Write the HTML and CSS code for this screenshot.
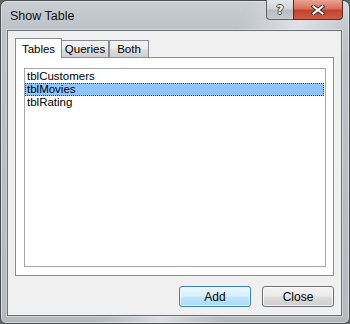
FILE: index.html
```html
<!DOCTYPE html>
<html lang="en">

<head>
    <meta charset="UTF-8">
    <title>Show Table</title>
    <link rel="stylesheet" href="styles.css">
</head>

<body>
    <div class="window">
        <div class="titlebar">
            <span class="title">Show Table</span>
            <div class="caption-buttons">
                <button class="cap cap-help">?</button>
                <button class="cap cap-close">
                    <svg width="14" height="10" viewBox="0 0 14 10">
                        <path d="M2.5 1.5 L11.5 8.5 M11.5 1.5 L2.5 8.5" stroke="#3a2a28" stroke-width="4" stroke-linecap="square" fill="none"/>
                        <path d="M2.5 1.5 L11.5 8.5 M11.5 1.5 L2.5 8.5" stroke="#fff" stroke-width="2" stroke-linecap="square" fill="none"/>
                    </svg>
                </button>
            </div>
        </div>

        <div class="client">
            <div class="tabs">
                <div class="tab active">Tables</div>
                <div class="tab tab-queries">Queries</div>
                <div class="tab tab-both">Both</div>
            </div>
            <div class="panel">
                <ul class="listbox">
                    <li>tblCustomers</li>
                    <li class="selected">tblMovies</li>
                    <li>tblRating</li>
                </ul>
            </div>
            <div class="actions">
                <button class="btn default">Add</button>
                <button class="btn">Close</button>
            </div>
        </div>
    </div>
</body>

</html>
```

FILE: styles.css
```css
html,
body {
    margin: 0;
    padding: 0;
    background-color: #5e646b;
}

body {
    width: 350px;
    height: 324px;
    font-family: "Liberation Sans", Arial, sans-serif;
    font-size: 11px;
    color: #000;
}

.window {
    width: 350px;
    height: 324px;
    box-sizing: border-box;
    border: 1px solid #4a4f55;
    border-radius: 7px 7px 6px 6px;
    display: flex;
    flex-direction: column;
    padding: 0 7px 7px 6px;
    background:
        linear-gradient(115deg, rgba(255, 255, 255, 0) 50%, rgba(255, 255, 255, 0.5) 62%, rgba(255, 255, 255, 0) 74%),
        linear-gradient(to bottom, #c9ced3 0, #bcc2c8 30px, #b4bac0 100%);
    box-shadow: inset 0 0 0 1px rgba(255, 255, 255, 0.45);
}

.titlebar {
    height: 29px;
    display: flex;
    align-items: flex-start;
    flex-shrink: 0;
}

.title {
    font-size: 12.5px;
    padding: 8px 0 0 3px;
    color: #111;
}

.caption-buttons {
    margin-left: auto;
    display: flex;
    margin-top: -1px;
    margin-right: -1px;
}

.cap {
    height: 20px;
    padding: 0;
    margin: 0;
    border: 1px solid #5f656c;
    border-top: none;
    display: flex;
    align-items: center;
    justify-content: center;
}

.cap-help {
    width: 27px;
    border-radius: 0 0 0 4px;
    border-right: none;
    background: linear-gradient(to bottom, #e4e7ea 0, #d2d6da 45%, #b7bcc2 55%, #c6cbd0 100%);
    font-family: "DejaVu Sans", sans-serif;
    font-weight: bold;
    font-size: 12px;
    color: #fff;
    text-shadow: 1px 0 0 #3b3f44, -1px 0 0 #3b3f44, 0 1px 0 #3b3f44, 0 -1px 0 #3b3f44;
}

.cap-close {
    width: 50px;
    border-color: #5a2b24;
    border-radius: 0 0 4px 0;
    background: linear-gradient(to bottom, #e8a493 0, #d7705c 45%, #c0432e 55%, #cf5d45 100%);
}

.client {
    flex: 1;
    display: flex;
    flex-direction: column;
    background-color: #f0f0f0;
    border: 1px solid #6a6f75;
    padding: 7px 7px 8px 7px;
    box-shadow: 0 0 0 1px rgba(255, 255, 255, 0.35);
}

.tabs {
    display: flex;
    align-items: flex-end;
    margin-bottom: -1px;
    position: relative;
    z-index: 1;
}

.tab {
    box-sizing: border-box;
    height: 17px;
    margin-bottom: 1px;
    border: 1px solid #898c95;
    border-bottom: none;
    text-align: center;
    padding-top: 2px;
    font-size: 11.5px;
    background: linear-gradient(to bottom, #f3f3f3 0, #ebebeb 45%, #dddddd 55%, #cfcfcf 100%);
}

.tab.active {
    width: 47px;
    height: 20px;
    margin-bottom: 0;
    padding-top: 4px;
    background: #fff;
}

.tab-queries {
    width: 48px;
    margin-left: -1px;
}

.tab-both {
    width: 40px;
}

.panel {
    flex: 1;
    display: flex;
    border: 1px solid #898c95;
    background-color: #fff;
    padding: 10px 7px 8px 8px;
}

.listbox {
    flex: 1;
    list-style: none;
    margin: 0;
    padding: 1px 1px 0 0;
    border: 1px solid #a3a6ac;
    background-color: #fff;
}

.listbox li {
    height: 13px;
    line-height: 13px;
    padding-left: 2px;
    font-size: 11.5px;
    box-sizing: border-box;
}

.listbox li.selected {
    background-color: #8fc5ff;
    outline: 1px dotted #5a3a1c;
    outline-offset: -1px;
}

.actions {
    display: flex;
    justify-content: flex-end;
    gap: 11px;
    margin-top: 10px;
}

.btn {
    width: 72px;
    height: 21px;
    font-family: "Liberation Sans", Arial, sans-serif;
    font-size: 12px;
    border: 1px solid #707070;
    border-radius: 3px;
    background: linear-gradient(to bottom, #f2f2f2 0, #ebebeb 45%, #dddddd 55%, #cfcfcf 100%);
    box-shadow: inset 0 0 0 1px rgba(255, 255, 255, 0.7);
    color: #000;
    padding: 0;
}

.btn.default {
    border-color: #3c7fb1;
    background: linear-gradient(to bottom, #eaf6fd 0, #d9f0fc 45%, #bee6fd 55%, #a7d9f5 100%);
}
```
